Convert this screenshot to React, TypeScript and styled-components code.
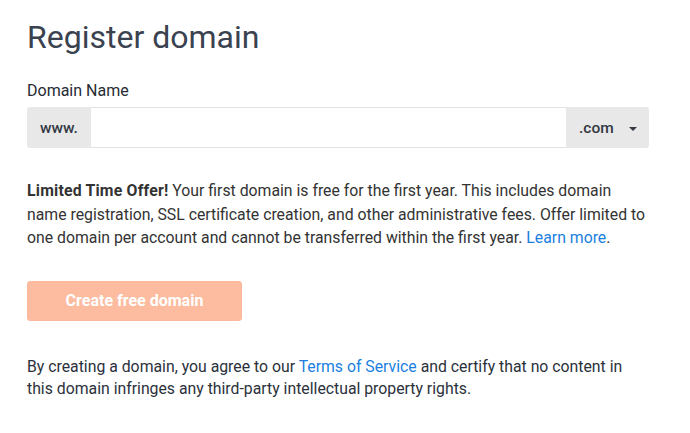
import React from "react";
import styled, { createGlobalStyle } from "styled-components";

const Global = createGlobalStyle`
  html, body { margin: 0; padding: 0; background: #fff; }
  body { font-family: Roboto, "Liberation Sans", sans-serif; -webkit-font-smoothing: antialiased; }
`;

const Page = styled.div`
  padding: 16px 27px 0 27px;
  width: 690px;
  box-sizing: border-box;
`;

const Title = styled.h1`
  margin: 0;
  font-size: 32px;
  font-weight: 400;
  color: #3a4250;
  line-height: 42px;
`;

const Label = styled.label`
  display: block;
  margin-top: 23px;
  font-size: 16px;
  font-weight: 400;
  color: #262b33;
  line-height: 20px;
`;

const InputRow = styled.div`
  display: flex;
  margin-top: 6px;
  height: 41px;
  width: 622px;
`;

const Addon = styled.div<{ $side: "left" | "right" }>`
  display: flex;
  align-items: center;
  gap: 15px;
  background: #e8e8e8;
  color: #333a44;
  font-size: 15.5px;
  font-weight: 500;
  padding: 0 ${(p) => (p.$side === "left" ? "0 0 13px" : "13px 0 13px")};
  width: ${(p) => (p.$side === "left" ? "64px" : "83px")};
  box-sizing: border-box;
  border-radius: ${(p) => (p.$side === "left" ? "3px 0 0 3px" : "0 3px 3px 0")};
`;

const TextInput = styled.input`
  flex: 1;
  border: 1px solid #e2e2e2;
  border-left: none;
  border-right: none;
  outline: none;
  padding: 0 10px;
  font: inherit;
  background: #fff;
  min-width: 0;
`;

const Caret = styled.span`
  width: 0;
  height: 0;
  border-left: 4px solid transparent;
  border-right: 4px solid transparent;
  border-top: 4px solid #333a44;
  margin-top: 2px;
`;

const Paragraph = styled.p<{ $top: number; $width: number }>`
  margin: ${(p) => p.$top}px 0 0;
  max-width: ${(p) => p.$width}px;
  font-size: 15.8px;
  line-height: 23.5px;
  color: #333;
`;

const Bold = styled.strong`
  font-weight: 700;
  letter-spacing: 0.2px;
`;

const Link = styled.a`
  color: #1a7fe0;
  text-decoration: none;
`;

const Button = styled.button`
  display: block;
  margin-top: 31px;
  width: 215px;
  height: 40px;
  border: 1px solid #fcb79c;
  border-radius: 3px;
  background: #fdbb9f;
  color: #fff;
  font-family: inherit;
  font-size: 16px;
  font-weight: 700;
`;

const Footer = styled(Paragraph)`
  color: #2b313b;
  line-height: 22px;
`;

export default function App() {
  return (
    <>
      <Global />
      <Page>
        <Title>Register domain</Title>
        <Label>Domain Name</Label>
        <InputRow>
          <Addon $side="left">www.</Addon>
          <TextInput />
          <Addon $side="right">
            .com <Caret />
          </Addon>
        </InputRow>
        <Paragraph $top={31} $width={636}>
          <Bold>Limited Time Offer!</Bold> Your first domain is free for the first year. This
          includes domain
          <br />
          name registration, SSL certificate creation, and other administrative fees. Offer
          limited to one domain per account and cannot be transferred within the first year.{" "}
          <Link href="#">Learn more</Link>.
        </Paragraph>
        <Button>Create free domain</Button>
        <Footer $top={35} $width={609}>
          By creating a domain, you agree to our <Link href="#">Terms of Service</Link> and certify
          that no content in this domain infringes any third-party intellectual property rights.
        </Footer>
      </Page>
    </>
  );
}
